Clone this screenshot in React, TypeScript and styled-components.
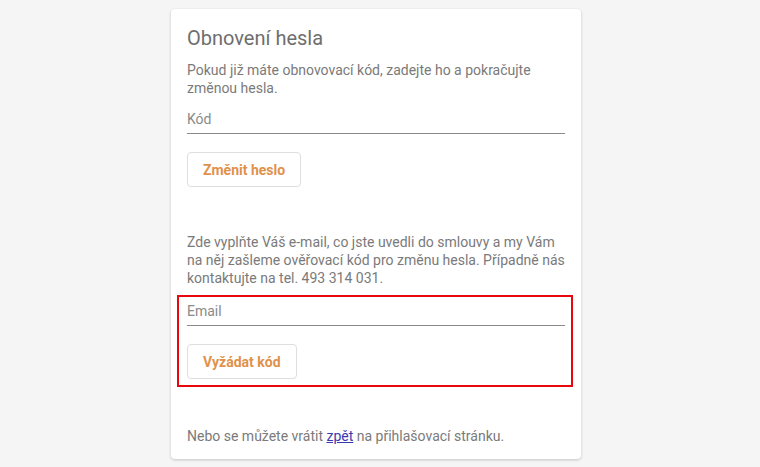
import React from "react";
import styled, { createGlobalStyle } from "styled-components";

const GlobalStyle = createGlobalStyle`
  html, body {
    margin: 0;
    padding: 0;
    background: #f5f5f5;
    font-family: Roboto, "Liberation Sans", Arial, sans-serif;
  }
`;

const Page = styled.div`
  display: flex;
  justify-content: center;
  padding: 9px 8px 0 0;
  min-height: 467px;
  box-sizing: border-box;
`;

const Card = styled.div`
  width: 410px;
  height: 450px;
  box-sizing: border-box;
  background: #fff;
  border-radius: 4px;
  box-shadow: 0 1px 3px rgba(0, 0, 0, 0.2);
  padding: 17px 16px 0 16px;
  display: flex;
  flex-direction: column;
`;

const Title = styled.h2`
  margin: 0;
  font-size: 20px;
  font-weight: 400;
  color: #6e6e6e;
  line-height: 24px;
`;

const Text = styled.p<{ $mt?: number }>`
  margin: ${(p) => p.$mt ?? 0}px 0 0;
  font-size: 14px;
  line-height: 18px;
  color: #7a7a7a;

  a {
    color: #3a3ab0;
  }
`;

const Field = styled.input`
  display: block;
  width: 100%;
  box-sizing: border-box;
  border: none;
  border-bottom: 1px solid #8a8a8a;
  outline: none;
  padding: 0 0 4px;
  margin: 0;
  font-family: inherit;
  font-size: 14px;
  line-height: 20px;
  color: #555;
  background: transparent;

  &::placeholder {
    color: #8a8a8a;
  }
`;

const FieldWrap = styled.div<{ $mt: number }>`
  margin-top: ${(p) => p.$mt}px;
`;

const Button = styled.button<{ $mt: number }>`
  align-self: flex-start;
  margin-top: ${(p) => p.$mt}px;
  height: 35px;
  padding: 0 15px;
  background: #fff;
  border: 1px solid #dedede;
  border-radius: 4px;
  font-family: inherit;
  font-size: 14px;
  font-weight: 700;
  color: #e0914b;
  cursor: pointer;
`;

const Highlight = styled.div`
  margin: 8px -8px 0 -10px;
  padding: 4px 6px 6px 8px;
  border: 2px solid #e8080c;
  display: flex;
  flex-direction: column;
`;

export default function App() {
  return (
    <>
      <GlobalStyle />
      <Page>
        <Card>
          <Title>Obnovení hesla</Title>
          <Text $mt={11}>
            Pokud již máte obnovovací kód, zadejte ho a pokračujte změnou hesla.
          </Text>
          <FieldWrap $mt={12}>
            <Field placeholder="Kód" />
          </FieldWrap>
          <Button $mt={18}>Změnit heslo</Button>
          <Text $mt={46}>
            Zde vyplňte Váš e-mail, co jste uvedli do smlouvy a my Vám na něj
            zašleme ověřovací kód pro změnu hesla. Případně nás kontaktujte na
            tel. 493 314 031.
          </Text>
          <Highlight>
            <Field placeholder="Email" />
            <Button $mt={18}>Vyžádat kód</Button>
          </Highlight>
          <Text $mt={40}>
            Nebo se můžete vrátit <a href="#">zpět</a> na přihlašovací stránku.
          </Text>
        </Card>
      </Page>
    </>
  );
}
